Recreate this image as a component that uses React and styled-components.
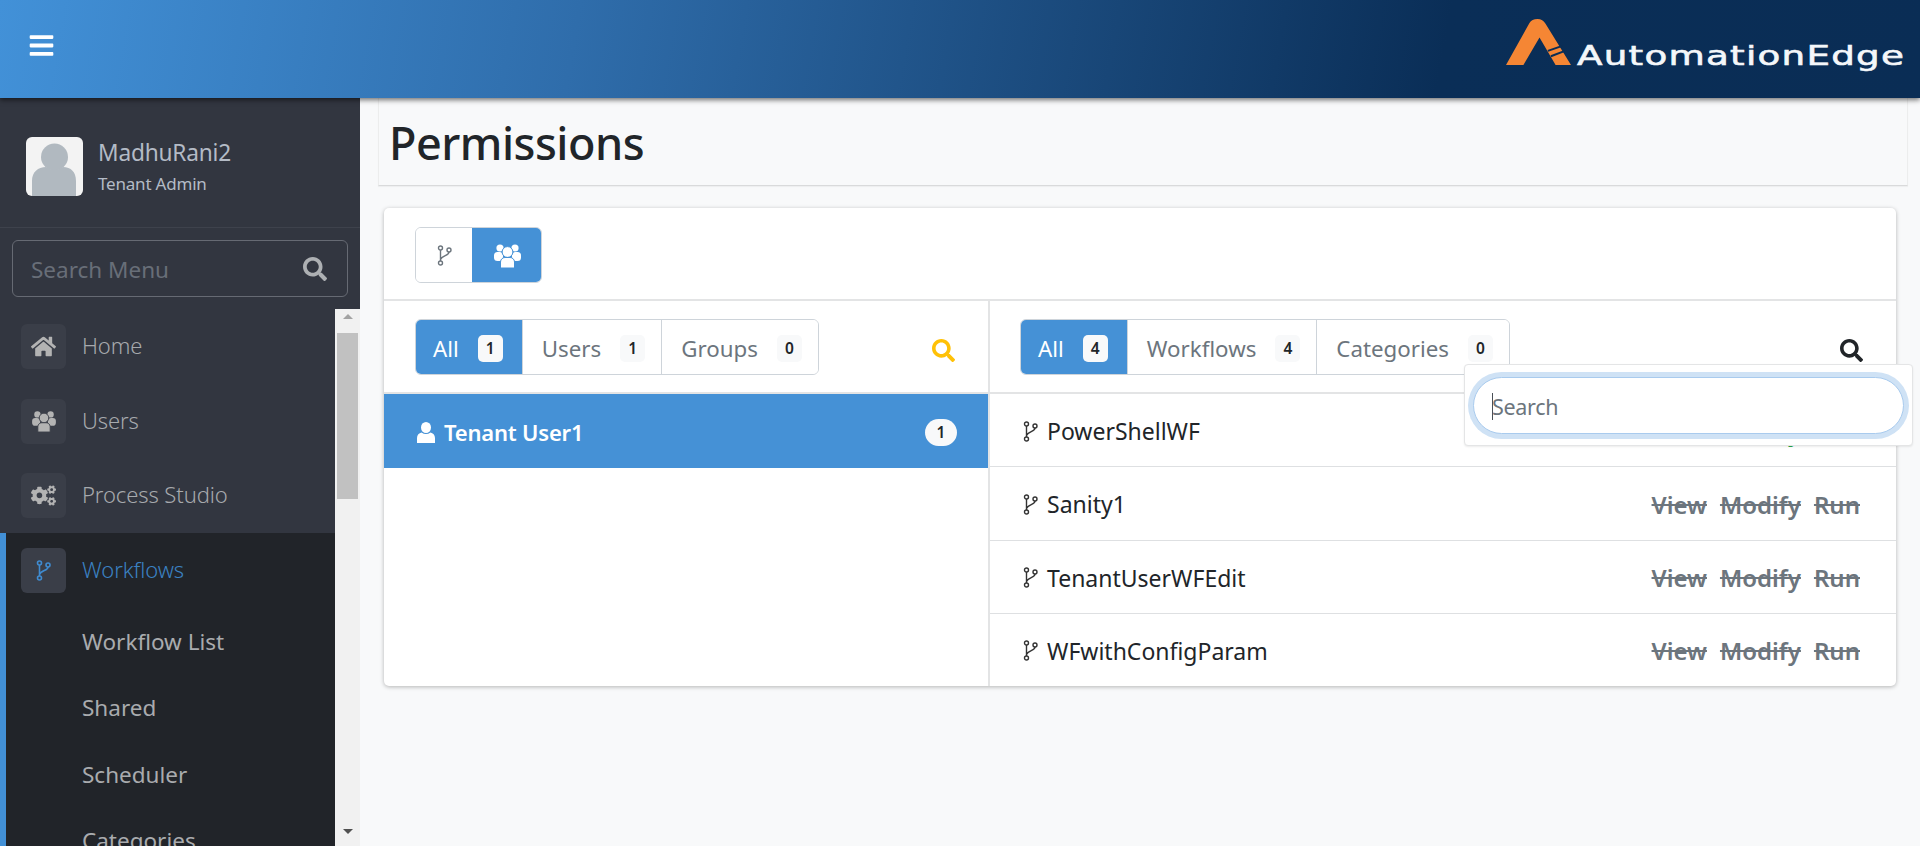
import React from 'react';
import styled, { createGlobalStyle } from 'styled-components';
import { FaBars, FaHome, FaCogs, FaSearch } from 'react-icons/fa';

const Global = createGlobalStyle`
  html, body { margin: 0; padding: 0; height: 846px; overflow: hidden; background: #f8f9fa; }
  * { box-sizing: border-box; }
  body { font-family: "Noto Sans", "Open Sans", sans-serif; color: #212529; }
`;

const Page = styled.div`display: flex; flex-direction: column; width: 1920px; height: 846px; overflow: hidden;`;

const Header = styled.header`
  position: relative; z-index: 5; flex: 0 0 98px; display: flex; align-items: center; justify-content: space-between;
  padding: 0 15px 0 28px; color: #fff;
  background: linear-gradient(100deg, #4291d8 0%, #2f6dab 30%, #0a2e57 75%, #0a2d55 100%);
  box-shadow: 0 2px 5px rgba(0,0,0,.55);
`;
const MenuButton = styled.div`display: flex; margin-top: -8px; font-size: 27px; line-height: 0;`;
const Logo = styled.div`display: flex; align-items: flex-end; height: 46px; margin-bottom: 14px;`;
const LogoText = styled.span`
  display: inline-block; font-family: "DejaVu Sans", sans-serif; font-size: 27px; line-height: 27px; font-weight: 400;
  color: #f4f7fa; letter-spacing: .9px; margin-left: 6px; width: 328px; white-space: nowrap; transform-origin: left bottom;
  transform: translateY(4px) scaleX(1.38); -webkit-text-stroke: .6px #f4f7fa;
`;

const Body = styled.div`flex: 1; display: flex; min-height: 0;`;
const Sidebar = styled.aside`flex: 0 0 360px; display: flex; flex-direction: column; background: #323640; min-height: 0;`;
const Profile = styled.div`flex: 0 0 130px; display: flex; align-items: center; gap: 15px; padding: 8px 0 0 26px; border-bottom: 1px solid #3e424c;`;
const Avatar = styled.div`width: 57px; height: 59px; border-radius: 6px; background: #f3f3f3; overflow: hidden; flex: none; display: flex;`;
const ProfileText = styled.div`display: flex; flex-direction: column; gap: 5px;`;
const UserName = styled.div`font-size: 22.7px; line-height: 30px; color: #b4bbc6; letter-spacing: -.2px;`;
const UserRole = styled.div`font-size: 17px; line-height: 22px; color: #b4bbc6; letter-spacing: -.2px;`;
const MenuSearch = styled.div`
  margin: 12px 12px 12px; height: 57px; flex: none; border: 1px solid #666a73; border-radius: 6px; display: flex; align-items: center;
  justify-content: space-between; padding: 2px 20px 0 18px; font-size: 22.5px; color: #686e78;
  svg { color: #adb0b3; font-size: 24px; margin-top: -2px; }
`;
const NavWrap = styled.div`flex: 1; display: flex; min-height: 0;`;
const Nav = styled.nav`flex: 1; overflow: hidden; min-width: 0;`;
const NavItem = styled.div`
  height: 74.5px; display: flex; align-items: flex-start; gap: 16px; padding: 15px 0 0 21px;
  font-size: 22px; font-weight: 300; letter-spacing: -.1px; color: ${p => p.$active ? '#3b81c2' : '#a6a9ad'};
`;
const NavIcon = styled.span`
  flex: none; width: 45px; height: 45px; border-radius: 6px; background: #3a3e48; display: flex; align-items: center; justify-content: center;
  color: ${p => p.$active ? '#3f8bd0' : '#b3b3b3'}; font-size: 25px;
`;
const NavLabel = styled.span`line-height: 43px;`;
const ActiveGroup = styled.div`background: #212429; border-left: 6px solid #4290d6; padding-bottom: 40px; ${NavItem} { padding-left: 15px; height: 75.5px; }`;
const SubItem = styled.div`height: 66.5px; padding-left: 76px; display: flex; align-items: center; font-size: 22.5px; color: #a9abae;`;
const Track = styled.div`flex: 0 0 25px; background: #f1f1f1; display: flex; flex-direction: column; align-items: center; position: relative;`;
const Arrow = styled.div`
  flex: none; width: 0; height: 0; border-left: 5.5px solid transparent; border-right: 5.5px solid transparent;
  ${p => p.$up ? 'border-bottom: 5.5px solid #a3a3a3; margin-top: 5px;' : 'border-top: 5.5px solid #505050; margin-bottom: 12px;'}
`;
const Thumb = styled.div`flex: none; width: 21px; height: 166px; background: #c1c1c1; margin-top: 14px;`;
const Spacer = styled.div`flex: 1;`;

const Main = styled.main`flex: 1; min-width: 0; padding: 0 12px 0 18px; background: #f8f9fa;`;
const TitleBar = styled.div`
  height: 88px; margin-bottom: 22px; border-bottom: 1px solid #d9dadb; border-left: 1px solid #eceded; border-right: 1px solid #eceded;
  padding: 2px 0 0 10px; display: flex; align-items: center; box-shadow: 0 1px 1px rgba(0,0,0,.04);
`;
const Title = styled.h1`margin: 0; font-size: 45px; font-weight: 500; letter-spacing: -.5px; color: #212529; line-height: 1;`;
const Card = styled.section`
  position: relative; margin: 0 12px 0 6px; height: 478px; background: #fff; border-radius: 5px; box-shadow: 0 1px 4px rgba(0,0,0,.28);
  display: flex; flex-direction: column;
`;
const Toolbar = styled.div`flex: 0 0 93px; padding: 19px 31px 0; border-bottom: 2px solid #e3e4e5;`;
const ButtonGroup = styled.div`display: inline-flex; height: 56px; border: 1px solid #ced4da; border-radius: 6px; overflow: hidden;`;
const IconButton = styled.div`
  display: flex; align-items: center; justify-content: center; width: ${p => p.$w}px; margin: -1px 0;
  background: ${p => p.$on ? '#4591d6' : '#fff'}; color: ${p => p.$on ? '#fff' : '#6c757d'};
  &:last-child { margin-right: -1px; }
`;
const Columns = styled.div`flex: 1; display: flex; min-height: 0;`;
const LeftCol = styled.div`flex: 0 0 606px; border-right: 2px solid #e3e4e5; display: flex; flex-direction: column;`;
const RightCol = styled.div`flex: 1; min-width: 0; display: flex; flex-direction: column;`;
const TabBar = styled.div`
  flex: 0 0 93px; padding: 18px 33px 0 31px; display: flex; align-items: flex-start; justify-content: space-between;
  border-bottom: 2px solid #e3e4e5;
`;
const RightTabBar = styled(TabBar)`padding-left: 30px; padding-right: 33px;`;
const Tabs = styled.div`display: flex; height: 56px; border: 1px solid #ced4da; border-radius: 6px; overflow: hidden;`;
const Tab = styled.div`
  display: flex; align-items: center; gap: 19px; padding: 0 ${p => p.$on ? 19 : 16}px 0 ${p => p.$on ? 18 : 19}px; margin: ${p => p.$on ? '-1px 0 -1px -1px' : '0'};
  font-size: 22.3px; color: ${p => p.$on ? '#fff' : '#6c757d'}; background: ${p => p.$on ? '#4591d6' : '#fff'};
  & + & { border-left: 1px solid #ced4da; }
`;
const TabLabel = styled.span`position: relative; top: 1px;`;
const Count = styled.span`
  width: 25px; height: 27px; border-radius: 5px; background: #f8f9fa; color: #212529; font-size: 15.5px; font-weight: 600;
  display: flex; align-items: center; justify-content: center; letter-spacing: 0; margin-top: 2px;
`;
const SearchToggle = styled.div`display: flex; margin-top: 20px; font-size: 23px; color: ${p => p.$c};`;
const SelectedRow = styled.div`
  flex: 0 0 74px; background: #4591d6; color: #fff; display: flex; align-items: center; justify-content: space-between; padding: 2px 31px 0 33px;
  font-size: 22px; font-weight: 600; letter-spacing: -.2px;
`;
const RowName = styled.div`display: flex; align-items: center; gap: 9px; svg { flex: none; }`;
const Pill = styled.span`
  width: 32px; height: 27px; border-radius: 14px; background: #f8f9fa; color: #212529; font-size: 15.5px; font-weight: 600;
  display: flex; align-items: center; justify-content: center; letter-spacing: 0;
`;
const Rows = styled.div`flex: 1; display: flex; flex-direction: column;`;
const Row = styled.div`
  flex: 1; display: flex; align-items: center; justify-content: space-between; padding: 2px 36px 0 33px; font-size: 23px; color: #212529;
  & + & { border-top: 1px solid #dee0e2; }
`;
const Actions = styled.div`display: flex; gap: 13px;`;
const Action = styled.span`font-weight: 600; font-size: 24px; text-decoration: line-through; color: ${p => p.$green ? '#28a745' : '#6c757d'};`;
const Popover = styled.div`
  position: absolute; left: 1080px; top: 156px; width: 449px; height: 82px; background: #fff; border: 1px solid #e4e5e6; border-radius: 4px;
  box-shadow: 0 1px 2px rgba(0,0,0,.08); padding: 12px 8px 0 8px; z-index: 3;
`;
const SearchInput = styled.div`
  height: 57px; border: 1px solid #a9cbee; border-radius: 29px; box-shadow: 0 0 0 5px #cfe2f5; background: #fff; display: flex; align-items: center;
  padding: 2px 0 0 18px; font-size: 21.5px; color: #6c757d; letter-spacing: -.3px;
`;
const Caret = styled.span`width: 1px; height: 27px; background: #495057; margin-right: -1px; flex: none;`;

const Fork = ({ w = 15, h = 21, c = '#333', sw = 1.4 }) => (
  <svg width={w} height={h} viewBox="0 0 15 21" fill="none" stroke={c} strokeWidth={sw}>
    <circle cx="3.5" cy="3" r="2" /><circle cx="12" cy="5" r="2" /><circle cx="3.5" cy="18" r="2" />
    <path d="M3.5 5V16M12 7C12 11 5 10 3.5 14.5" />
  </svg>
);

const Users = ({ w, h, bg }) => (
  <svg width={w} height={h} viewBox="0 0 27 25" fill="currentColor">
    <circle cx="6" cy="5" r="3.6" /><circle cx="21" cy="5" r="3.6" />
    <rect x="0" y="9" width="9" height="9" rx="3.5" /><rect x="18" y="9" width="9" height="9" rx="3.5" />
    <circle cx="13.5" cy="9" r="5.4" stroke={bg} strokeWidth="1" />
    <path d="M6.5 25V19C6.5 16 9 14.5 11 14.5H16C18 14.5 20.5 16 20.5 19V25Z" stroke={bg} strokeWidth="1" />
  </svg>
);

const Person = () => (
  <svg width="18" height="21" viewBox="0 0 18 21" fill="currentColor">
    <ellipse cx="9" cy="5.5" rx="5" ry="5.5" />
    <path d="M0 21V16C0 13 2 11 4.5 10.5Q9 13.5 13.500 10.500C16 11 18 13 18 16V21Z" />
  </svg>
);

const LogoMark = () => (
  <svg width="65" height="46" viewBox="78 58 194 137">
    <path fill="#f58634" d="M78 195L148 70Q155 58 172 58Q188 58 196 72L272 195H226L178 113L130 195Z" />
    <path stroke="#0a2d55" strokeWidth="6" fill="none" d="M203 153L246 138M212 169L254 153" />
  </svg>
);

const AvatarImg = () => (
  <svg width="57" height="59" viewBox="0 0 57 59">
    <circle cx="28.5" cy="20" r="13.5" fill="#b1b9c0" />
    <path d="M6 59V44C6 35 12 30 20 30Q28.5 36 37 30C45 30 50 35 50 44V59Z" fill="#b1b9c0" />
  </svg>
);

const wf = ['Sanity1', 'TenantUserWFEdit', 'WFwithConfigParam'];

export default function App() {
  return (
    <Page>
      <Global />
      <Header>
        <MenuButton><FaBars /></MenuButton>
        <Logo><LogoMark /><LogoText>AutomationEdge</LogoText></Logo>
      </Header>
      <Body>
        <Sidebar>
          <Profile>
            <Avatar><AvatarImg /></Avatar>
            <ProfileText><UserName>MadhuRani2</UserName><UserRole>Tenant Admin</UserRole></ProfileText>
          </Profile>
          <MenuSearch>Search Menu<FaSearch /></MenuSearch>
          <NavWrap>
            <Nav>
              <NavItem><NavIcon><FaHome /></NavIcon><NavLabel>Home</NavLabel></NavItem>
              <NavItem><NavIcon><Users w={24} h={22} bg="#3a3e48" /></NavIcon><NavLabel>Users</NavLabel></NavItem>
              <NavItem><NavIcon><FaCogs /></NavIcon><NavLabel>Process Studio</NavLabel></NavItem>
              <ActiveGroup>
                <NavItem $active><NavIcon $active><Fork c="#3f8bd0" sw={1.6} /></NavIcon><NavLabel>Workflows</NavLabel></NavItem>
                <SubItem>Workflow List</SubItem>
                <SubItem>Shared</SubItem>
                <SubItem>Scheduler</SubItem>
                <SubItem>Categories</SubItem>
              </ActiveGroup>
            </Nav>
            <Track><Arrow $up /><Thumb /><Spacer /><Arrow /></Track>
          </NavWrap>
        </Sidebar>
        <Main>
          <TitleBar><Title>Permissions</Title></TitleBar>
          <Card>
            <Toolbar>
              <ButtonGroup>
                <IconButton $w={56}><Fork c="#6c757d" /></IconButton>
                <IconButton $w={70} $on><Users w={27} h={25} bg="#4591d6" /></IconButton>
              </ButtonGroup>
            </Toolbar>
            <Columns>
              <LeftCol>
                <TabBar>
                  <Tabs>
                    <Tab $on><TabLabel>All</TabLabel><Count>1</Count></Tab>
                    <Tab><TabLabel>Users</TabLabel><Count>1</Count></Tab>
                    <Tab><TabLabel>Groups</TabLabel><Count>0</Count></Tab>
                  </Tabs>
                  <SearchToggle $c="#ffc107"><FaSearch /></SearchToggle>
                </TabBar>
                <SelectedRow>
                  <RowName><Person />Tenant User1</RowName>
                  <Pill>1</Pill>
                </SelectedRow>
              </LeftCol>
              <RightCol>
                <RightTabBar>
                  <Tabs>
                    <Tab $on><TabLabel>All</TabLabel><Count>4</Count></Tab>
                    <Tab><TabLabel>Workflows</TabLabel><Count>4</Count></Tab>
                    <Tab><TabLabel>Categories</TabLabel><Count>0</Count></Tab>
                  </Tabs>
                  <SearchToggle $c="#212529"><FaSearch /></SearchToggle>
                </RightTabBar>
                <Rows>
                  <Row>
                    <RowName><Fork />PowerShellWF</RowName>
                    <Actions><Action $green>View</Action><Action $green>Modify</Action><Action $green>Run</Action></Actions>
                  </Row>
                  {wf.map(n => (
                    <Row key={n}>
                      <RowName><Fork />{n}</RowName>
                      <Actions><Action>View</Action><Action>Modify</Action><Action>Run</Action></Actions>
                    </Row>
                  ))}
                </Rows>
              </RightCol>
            </Columns>
            <Popover><SearchInput><Caret />Search</SearchInput></Popover>
          </Card>
        </Main>
      </Body>
    </Page>
  );
}
